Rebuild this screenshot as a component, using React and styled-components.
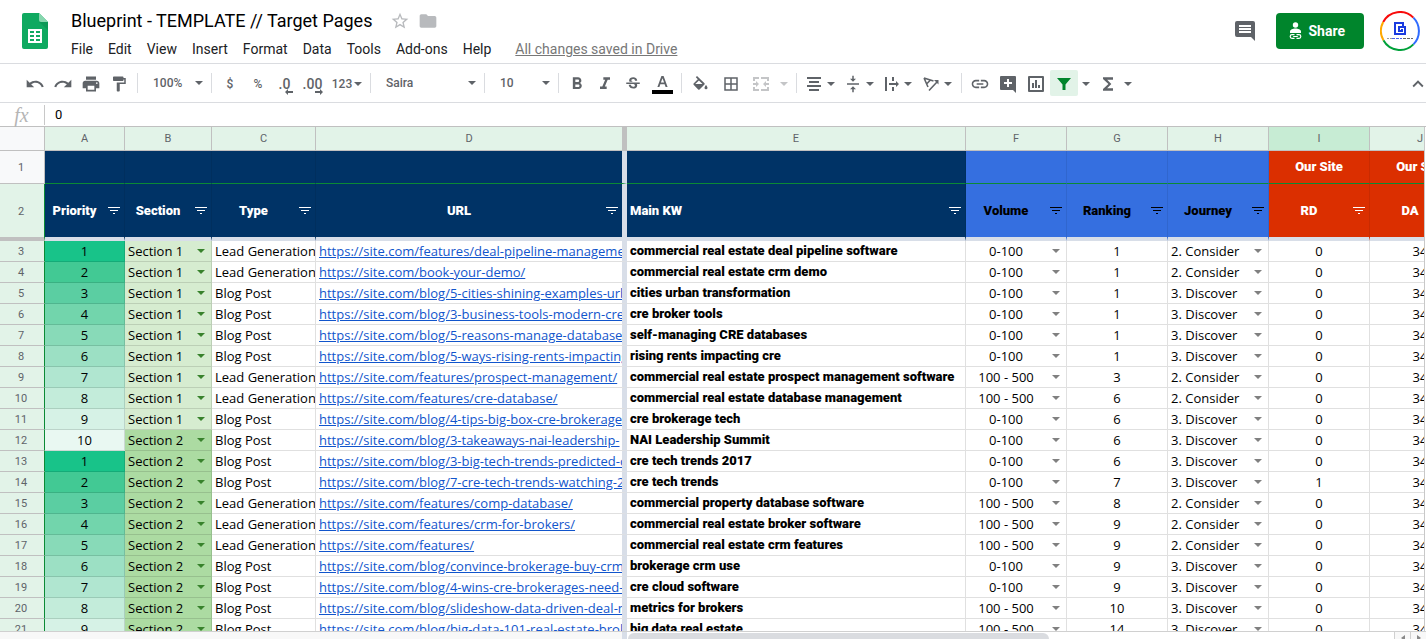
import styled, { createGlobalStyle } from "styled-components"
import {
    MdUndo, MdRedo, MdPrint, MdFormatPaint, MdFormatBold, MdFormatItalic, MdStrikethroughS,
    MdBorderAll, MdVerticalAlignCenter, MdLink,
    MdFunctions, MdExpandLess, MdStarBorder, MdFolder,
} from "react-icons/md"

const GlobalStyle = createGlobalStyle`
    body {
        margin: 0;
        background: #fff;
        color: #000;
        font-family: Roboto, "Liberation Sans", sans-serif;
    }

    button, select, input {
        font: inherit;
        color: inherit;
        margin: 0;
        padding: 0;
        border: 0;
        background: none;
    }

    button {
        cursor: pointer;
    }

    svg {
        display: block;
        flex-shrink: 0;
    }
`

const Page = styled.div`
    display: flex;
    flex-direction: column;
    height: 100vh;
    overflow: hidden;
`

/* ---------- header ---------- */

const Header = styled.header`
    display: flex;
    align-items: center;
    box-sizing: border-box;
    height: 64px;
    flex-shrink: 0;
    padding: 0 6px 1px 22px;
    border-bottom: 1px solid #dadce0;
`

const Titles = styled.div`
    display: flex;
    flex-direction: column;
    flex: 1;
    gap: 6px;
    margin-left: 16px;
    padding-top: 5px;
`

const TitleRow = styled.div`
    display: flex;
    align-items: center;
    padding-left: 7px;
    color: #b8babd;
`

const Title = styled.h1`
    margin: 0 18px 0 0;
    color: #000;
    font-size: 18px;
    font-weight: 400;
    line-height: 24px;
`

const IconButton = styled.button`
    display: flex;
    margin-right: 8px;
`

const MenuBar = styled.nav`
    display: flex;
    align-items: center;
    gap: 1px;
    font-size: 14px;
    line-height: 20px;
    color: #202124;
`

const MenuItem = styled.button`
    padding: 0 7px;
`

const SavedLink = styled.a`
    margin-left: 16px;
    color: #777;
    text-decoration: underline;
`

const ShareButton = styled.button`
    display: flex;
    align-items: center;
    gap: 6px;
    height: 36px;
    margin: 0 16px 0 21px;
    padding: 0 19px 0 13px;
    border-radius: 4px;
    background: #00852c;
    color: #fff;
    font-size: 14px;
    font-weight: 700;
`

/* ---------- toolbar ---------- */

const Toolbar = styled.div`
    display: flex;
    align-items: center;
    height: 38px;
    flex-shrink: 0;
    padding: 0 0 0 21px;
    border-bottom: 1px solid #dadce0;
    color: #5f6368;
    font-size: 12px;
    font-weight: 500;
`

const Tool = styled.button`
    display: flex;
    align-items: center;
    justify-content: center;
    gap: 2px;
    box-sizing: border-box;
    width: ${({ $w }) => $w || 28}px;
    height: 26px;
    padding-top: 2px;
    flex-shrink: 0;
    border-radius: 2px;
    color: ${({ $off, $on }) => ($off ? "#c4c5c7" : $on ? "#00852c" : "inherit")};
    background: ${({ $on }) => ($on ? "#e2f3e8" : "none")};
`

const MenuTool = styled(Tool)`
    width: 39px;
    gap: 4px;
    padding: 2px 5px 0 4px;
`

const Separator = styled.span`
    width: 1px;
    height: 20px;
    margin: 0 4px;
    flex-shrink: 0;
    background: #dadce0;
`

const Picker = styled.label`
    display: grid;
    align-items: center;
    width: ${({ $w }) => $w}px;
    flex-shrink: 0;

    & > * {
        grid-area: 1 / 1;
    }

    & > svg {
        justify-self: end;
        margin-right: 4px;
        pointer-events: none;
    }
`

const PickerSelect = styled.select`
    appearance: none;
    width: 100%;
    height: 26px;
    padding: 0 16px 0 11px;
`

const CollapseButton = styled(Tool)`
    width: 16px;
    margin-left: auto;
`

/* ---------- formula bar ---------- */

const FormulaBar = styled.div`
    display: flex;
    align-items: center;
    height: 23px;
    flex-shrink: 0;
    border-bottom: 1px solid #c0c0c0;
`

const Fx = styled.span`
    width: 45px;
    box-sizing: border-box;
    padding-right: 1px;
    border-right: 1px solid #c8c8c8;
    color: #b5b5b5;
    font-family: "Liberation Serif", serif;
    font-size: 20px;
    font-style: italic;
    line-height: 20px;
    text-align: center;
`

const FormulaInput = styled.input`
    flex: 1;
    padding: 0 10px;
    font-size: 13px;
    outline: none;
`

/* ---------- sheet ---------- */

const SheetArea = styled.div`
    flex: 1;
    min-height: 0;
    margin-right: 1px;
    overflow: hidden;
    border-right: 1px solid #c8c8c8;
`

const Sheet = styled.table`
    width: 1471px;
    table-layout: fixed;
    border-collapse: separate;
    border-spacing: 0;
    font-family: "Open Sans", "Liberation Sans", sans-serif;
    font-size: 13px;
    line-height: 20px;
`

const ColHead = styled.th`
    height: 24px;
    box-sizing: border-box;
    padding: 0;
    border-right: ${({ $frozen }) => ($frozen ? 5 : 1)}px solid #c0c0c0;
    border-bottom: 1px solid #c0c0c0;
    background: ${({ $tone }) => $tone || "#e2f3e8"};
    color: #5f6368;
    font-family: Roboto, sans-serif;
    font-size: 11px;
    font-weight: 400;
`

const RowHead = styled.th`
    box-sizing: border-box;
    height: ${({ $h }) => $h || 21}px;
    padding: 2px 2px 0 0;
    border-right: 1px solid ${({ $plain }) => ($plain ? "#c0c0c0" : "#0b8a35")};
    border-bottom: ${({ $frozen }) => ($frozen ? 4 : 1)}px solid #c0c0c0;
    background: ${({ $plain }) => ($plain ? "#f8f9fa" : "#e2f3e8")};
    color: #5f6368;
    font-family: Roboto, sans-serif;
    font-size: 11px;
    font-weight: 400;
    line-height: 16px;
`

const Cell = styled.td`
    box-sizing: border-box;
    padding: 0 ${({ $pad = 3 }) => $pad}px;
    overflow: hidden;
    border-right: ${({ $frozen }) => ($frozen ? "5px solid #d8dee8" : "1px solid rgba(0, 0, 0, 0.12)")};
    border-bottom: 1px solid rgba(0, 0, 0, 0.12);
    background: ${({ $bg }) => $bg || "#fff"};
    font-family: ${({ $bold }) => ($bold ? "Roboto, sans-serif" : "inherit")};
    font-weight: ${({ $bold }) => ($bold ? 900 : 400)};
    text-align: ${({ $align }) => $align || "left"};
    white-space: nowrap;
`

const TopCell = styled(Cell)`
    border-bottom-color: #0b8a35;
    border-right-color: ${({ $frozen }) => ($frozen ? "#d8dee8" : "rgba(0, 0, 0, 0.08)")};
    color: #fff;
`

const TitleCell = styled(Cell)`
    padding: 0;
    border-bottom: 4px solid #d8dee8;
    border-right-color: ${({ $frozen }) => ($frozen ? "#d8dee8" : "rgba(0, 0, 0, 0.08)")};
    color: ${({ $color }) => $color};
`

const TitleContent = styled.div`
    display: flex;
    align-items: center;

    & > span {
        flex: 1;
        padding-left: ${({ $left }) => ($left ? 3 : 0)}px;
        text-align: ${({ $left }) => ($left ? "left" : "center")};
    }
`

const FilterButton = styled.button`
    display: flex;
    justify-content: center;
    width: 20px;
`

const UrlLink = styled.a`
    color: #1155cc;
    text-decoration: underline;
`

const CellPicker = styled.label`
    display: grid;
    align-items: center;
    height: 20px;
    color: ${({ $caret }) => $caret};

    & > * {
        grid-area: 1 / 1;
    }

    & > svg {
        justify-self: end;
        margin-right: 6px;
        pointer-events: none;
    }
`

const CellSelect = styled.select`
    appearance: none;
    width: 100%;
    height: 20px;
    padding: 0 20px 0 ${({ $center }) => ($center ? 0 : 3)}px;
    color: #000;
    text-align: ${({ $center }) => ($center ? "center" : "left")};
    text-align-last: ${({ $center }) => ($center ? "center" : "left")};
`

/* ---------- bottom scroll bar ---------- */

const ScrollBar = styled.div`
    display: flex;
    height: 7px;
    flex-shrink: 0;
    overflow: hidden;
    border-top: 1px solid #d0d0d0;
`

const FrozenGutter = styled.div`
    width: 622px;
    flex-shrink: 0;
    border-right: 5px solid #d8dee8;
    background: #f8f8f8;
`

const Track = styled.div`
    flex: 1;
    padding: 1px 1px 0;
`

const Thumb = styled.div`
    width: 55%;
    height: 14px;
    border-radius: 6px;
    background: #dadce0;
`

const ScrollStep = styled.button`
    display: flex;
    justify-content: center;
    width: 16px;
    padding-top: 3px;
    box-sizing: border-box;
    border-left: 1px solid #d0d0d0;
    background: #f8f8f8;
`

/* ---------- icons ---------- */

const Caret = ({ color = "currentColor" }) => (
    <svg width="8" height="4" viewBox="0 0 8 4" fill={color}><path d="M0 0h8L4 4z" /></svg>
)

const FilterLines = () => (
    <svg width="12" height="8" viewBox="0 0 12 8" fill="currentColor">
        <path d="M0 0h12v1H0zM2 3h8v1H2zM5 6h2v1H5z" />
    </svg>
)

const SheetsLogo = () => (
    <svg width="26" height="36" viewBox="0 0 26 36">
        <path d="M2 0h15l9 9v25a2 2 0 0 1-2 2H2a2 2 0 0 1-2-2V2a2 2 0 0 1 2-2z" fill="#0fa960" />
        <path d="M17 9h9v8z" fill="#0c9152" opacity=".7" />
        <path d="M17 0l9 9h-7a2 2 0 0 1-2-2z" fill="#87d6ae" />
        <path d="M6 16h14v14H6zM8 18v2h4v-2zM14 18v2h4v-2zM8 22v2h4v-2zM14 22v2h4v-2zM8 26v2h4v-2zM14 26v2h4v-2z" fill="#fff" fillRule="evenodd" />
    </svg>
)

const CommentIcon = () => (
    <svg width="20" height="20" viewBox="0 0 20 20" fill="#5f6368" fillRule="evenodd">
        <path d="M2 0h16a2 2 0 0 1 2 2v18l-4-4H2a2 2 0 0 1-2-2V2a2 2 0 0 1 2-2zM4 4v2h12V4zM4 7v2h12V7zM4 10v2h12v-2z" />
    </svg>
)

const ShareIcon = () => (
    <svg width="13" height="18" viewBox="0 0 13 18" fill="#fff">
        <circle cx="6.5" cy="3" r="2.7" />
        <path d="M1 11V9.500C1 7.500 4 6.500 6.500 6.500s5.500 1 5.500 3V11z" />
        <path d="M5.500 12.700H3a1.800 1.800 0 0 0 0 3.600h2.500M7.500 12.700H10a1.800 1.800 0 0 1 0 3.600H7.500M4.200 14.500h4.600" fill="none" stroke="#fff" strokeWidth="1.200" />
    </svg>
)

const Avatar = () => (
    <svg width="40" height="40" viewBox="0 0 40 40" role="img" aria-label="Account">
        <g fill="none" strokeWidth="2">
            <path d="M3.200 11A19 19 0 0 1 33.400 6.600" stroke="#f80b0b" />
            <path d="M33.400 6.600A19 19 0 0 1 33.400 33.400" stroke="#2f6bff" />
            <path d="M33.400 33.400A19 19 0 0 1 3.400 29.300" stroke="#00a13a" />
            <path d="M3.400 29.300A19 19 0 0 1 3.200 11" stroke="#ffa800" />
        </g>
        <path d="M23 15v-3h-8v11h10v-7h-6v4h3v-2" fill="none" stroke="#1a3be0" strokeWidth="2" />
        <path d="M7 27.500h5" stroke="#999" strokeDasharray="2 1" />
        <path d="M12 27.500h10" stroke="#4a63e8" strokeDasharray="3 1" />
        <path d="M23 27.500h10" stroke="#666" strokeDasharray="3 1" />
    </svg>
)

const DecimalIcon = ({ more }) => (
    <svg width="20" height="22" viewBox="0 0 20 22" fill="currentColor">
        {more
            ? <path d="M11 18h5v-2l3 3-3 3v-2h-5z" />
            : <path d="M17 18h-5v-2l-3 3 3 3v-2h5z" />}
    </svg>
)

const DecimalTool = styled(Tool)`
    display: grid;
    justify-items: center;

    & > * {
        grid-area: 1 / 1;
    }

    & > span {
        padding-right: 3px;
        font-size: 14px;
        line-height: 16px;
    }
`

const TextColorIcon = () => (
    <svg width="21" height="22" viewBox="0 0 21 22">
        <path d="M9.400 3h2.200l4 11h-2l-1-2.800H8.300L7.400 14h-2zM10.500 5.200L8.900 9.600h3.200z" fill="#5f6368" fillRule="evenodd" />
        <path d="M0 17h21v4H0z" fill="#000" />
    </svg>
)

const FillIcon = () => (
    <svg width="16" height="16" viewBox="0 0 16 16" fill="currentColor" fillRule="evenodd">
        <path d="M4 0l-1.200 1.200 2 2L.6 7.600a1 1 0 0 0 0 1.200l4.600 4.600a1 1 0 0 0 1.300 0l5-5a1 1 0 0 0 0-1.200zM5.900 4.400L9.500 8H2.300z" />
        <path d="M13 9s-1.500 1.700-1.500 2.800a1.500 1.500 0 0 0 3 0C14.500 10.700 13 9 13 9z" />
    </svg>
)

const MergeIcon = () => (
    <svg width="18" height="16" viewBox="0 0 18 16" fill="currentColor">
        <path d="M1 1h6v2H3v2H1zM9 1h8v4h-2V3H9zM1 11h2v2h4v2H1zM15 11h2v4H9v-2h6zM1 7h3V5l3 3-3 3V9H1zM17 7h-3V5l-3 3 3 3V9h3z" />
    </svg>
)

const AlignIcon = () => (
    <svg width="18" height="14" viewBox="0 0 18 14" fill="currentColor">
        <path d="M2 0h14v2H2zM4 4h10v2H4zM2 8h14v2H2zM4 12h10v2H4z" />
    </svg>
)

const WrapIcon = () => (
    <svg width="16" height="14" viewBox="0 0 16 14" fill="currentColor">
        <path d="M1 0h2v14H1zM8 0h2v4H8zM8 10h2v4H8zM5 6h7V4l3 3-3 3V8H5z" />
    </svg>
)

const RotateIcon = () => (
    <svg width="18" height="16" viewBox="0 0 18 16" fill="none" stroke="currentColor" strokeWidth="1.600">
        <path d="M2 2l9.500 3M2 2l4 9M8.500 4L4.500 8M7 14.500L15 6" />
        <path d="M12 4h4.500v4.500z" fill="currentColor" stroke="none" />
    </svg>
)

const AddCommentIcon = () => (
    <svg width="16" height="17" viewBox="0 0 16 17" fill="currentColor" fillRule="evenodd">
        <path d="M1 0h14a1 1 0 0 1 1 1v16l-3-3H1a1 1 0 0 1-1-1V1a1 1 0 0 1 1-1zM7 3v3H4v2h3v3h2V8h3V6H9V3z" />
    </svg>
)

const ChartIcon = () => (
    <svg width="16" height="16" viewBox="0 0 16 16" fill="currentColor" fillRule="evenodd">
        <path d="M1 0h14a1 1 0 0 1 1 1v14a1 1 0 0 1-1 1H1a1 1 0 0 1-1-1V1a1 1 0 0 1 1-1zM2 2v12h12V2zM4 7h2v5H4zM7 4h2v8H7zM10 9h2v3h-2z" />
    </svg>
)

const FunnelIcon = () => (
    <svg width="14" height="12" viewBox="0 0 14 12" fill="currentColor"><path d="M0 0h14L8.500 6.500V12h-3V6.500z" /></svg>
)

/* ---------- data ---------- */

const NAVY = "#003366"
const BLUE = "#356fe0"
const RED = "#db2f00"

const columns = [
    { id: "A", width: 80, title: "Priority", bg: NAVY, color: "#fff" },
    { id: "B", width: 87, title: "Section", bg: NAVY, color: "#fff" },
    { id: "C", width: 104, title: "Type", bg: NAVY, color: "#fff" },
    { id: "D", width: 311, title: "URL", bg: NAVY, color: "#fff", frozen: true },
    { id: "E", width: 339, title: "Main KW", bg: NAVY, color: "#fff", left: true },
    { id: "F", width: 101, title: "Volume", bg: BLUE, color: "#000" },
    { id: "G", width: 101, title: "Ranking", bg: BLUE, color: "#000" },
    { id: "H", width: 101, title: "Journey", bg: BLUE, color: "#000" },
    { id: "I", width: 101, title: "RD", bg: RED, color: "#fff", top: "Our Site", active: true },
    { id: "J", width: 101, title: "DA", bg: RED, color: "#fff", top: "Our Site" },
]

const priorityColors = [
    "#18c389", "#42c994", "#5bcea2", "#72d5ac", "#88dab8",
    "#9ce0c4", "#b0e6d0", "#c3ecda", "#d6f2e6", "#e9f8f2",
]

const LEAD = "Lead Generation"
const BLOG = "Blog Post"
const LOW = "0-100"
const HIGH = "100 - 500"
const CONSIDER = "2. Consider"
const DISCOVER = "3. Discover"

// priority, section, type, path, keyword, volume, ranking, journey, rd
const rows = [
    [1, 1, LEAD, "features/deal-pipeline-management/", "commercial real estate deal pipeline software", LOW, 1, CONSIDER, 0],
    [2, 1, LEAD, "book-your-demo/", "commercial real estate crm demo", LOW, 1, CONSIDER, 0],
    [3, 1, BLOG, "blog/5-cities-shining-examples-urban", "cities urban transformation", LOW, 1, DISCOVER, 0],
    [4, 1, BLOG, "blog/3-business-tools-modern-cre-", "cre broker tools", LOW, 1, DISCOVER, 0],
    [5, 1, BLOG, "blog/5-reasons-manage-databases", "self-managing CRE databases", LOW, 1, DISCOVER, 0],
    [6, 1, BLOG, "blog/5-ways-rising-rents-impacting", "rising rents impacting cre", LOW, 1, DISCOVER, 0],
    [7, 1, LEAD, "features/prospect-management/", "commercial real estate prospect management software", HIGH, 3, CONSIDER, 0],
    [8, 1, LEAD, "features/cre-database/", "commercial real estate database management", HIGH, 6, CONSIDER, 0],
    [9, 1, BLOG, "blog/4-tips-big-box-cre-brokerage", "cre brokerage tech", LOW, 6, DISCOVER, 0],
    [10, 2, BLOG, "blog/3-takeaways-nai-leadership-", "NAI Leadership Summit", LOW, 6, DISCOVER, 0],
    [1, 2, BLOG, "blog/3-big-tech-trends-predicted-c", "cre tech trends 2017", LOW, 6, DISCOVER, 0],
    [2, 2, BLOG, "blog/7-cre-tech-trends-watching-2", "cre tech trends", LOW, 7, DISCOVER, 1],
    [3, 2, LEAD, "features/comp-database/", "commercial property database software", HIGH, 8, CONSIDER, 0],
    [4, 2, LEAD, "features/crm-for-brokers/", "commercial real estate broker software", HIGH, 9, CONSIDER, 0],
    [5, 2, LEAD, "features/", "commercial real estate crm features", HIGH, 9, CONSIDER, 0],
    [6, 2, BLOG, "blog/convince-brokerage-buy-crm/", "brokerage crm use", LOW, 9, DISCOVER, 0],
    [7, 2, BLOG, "blog/4-wins-cre-brokerages-need-", "cre cloud software", LOW, 9, DISCOVER, 0],
    [8, 2, BLOG, "blog/slideshow-data-driven-deal-m", "metrics for brokers", HIGH, 10, DISCOVER, 0],
    [9, 2, BLOG, "blog/big-data-101-real-estate-brok", "big data real estate", HIGH, 14, DISCOVER, 0],
]

const menus = ["File", "Edit", "View", "Insert", "Format", "Data", "Tools", "Add-ons", "Help"]

function DropCell({ label, value, options, center, bg, caret = "#808080" }) {
    return (
        <Cell $bg={bg} $pad={0}>
            <CellPicker $caret={caret}>
                <CellSelect aria-label={label} defaultValue={value} $center={center}>
                    {options.map((o) => <option key={o}>{o}</option>)}
                </CellSelect>
                <Caret />
            </CellPicker>
        </Cell>
    )
}

function SheetRow({ number, row }) {
    const [priority, section, type, path, keyword, volume, ranking, journey, rd] = row
    const url = `https://site.com/${path}`
    return (
        <tr>
            <RowHead scope="row">{number}</RowHead>
            <Cell $bg={priorityColors[priority - 1]} $align="center">{priority}</Cell>
            <DropCell
                label={`Section, row ${number}`}
                value={`Section ${section}`}
                options={["Section 1", "Section 2"]}
                bg={section === 1 ? "#d6ecd0" : "#acdba2"}
                caret="#38822c"
            />
            <Cell>{type}</Cell>
            <Cell $frozen><UrlLink href={url}>{url}</UrlLink></Cell>
            <Cell $bold>{keyword}</Cell>
            <DropCell label={`Volume, row ${number}`} value={volume} options={[LOW, HIGH]} center />
            <Cell $align="center">{ranking}</Cell>
            <DropCell label={`Journey, row ${number}`} value={journey} options={[CONSIDER, DISCOVER]} />
            <Cell $align="center">{rd}</Cell>
            <Cell $align="center">34</Cell>
        </tr>
    )
}

function TopBar() {
    return (
        <Header>
            <SheetsLogo />
            <Titles>
                <TitleRow>
                    <Title>Blueprint - TEMPLATE // Target Pages</Title>
                    <IconButton aria-label="Star"><MdStarBorder size={20} /></IconButton>
                    <IconButton aria-label="Move"><MdFolder size={20} /></IconButton>
                </TitleRow>
                <MenuBar>
                    {menus.map((m) => <MenuItem key={m}>{m}</MenuItem>)}
                    <SavedLink href="#history">All changes saved in Drive</SavedLink>
                </MenuBar>
            </Titles>
            <button aria-label="Comments"><CommentIcon /></button>
            <ShareButton><ShareIcon />Share</ShareButton>
            <Avatar />
        </Header>
    )
}

function ToolRow() {
    return (
        <Toolbar role="toolbar">
            <Tool aria-label="Undo"><MdUndo size={20} /></Tool>
            <Tool aria-label="Redo"><MdRedo size={20} /></Tool>
            <Tool aria-label="Print"><MdPrint size={20} /></Tool>
            <Tool aria-label="Paint format"><MdFormatPaint size={18} /></Tool>
            <Separator />
            <Picker $w={65}>
                <PickerSelect aria-label="Zoom"><option>100%</option></PickerSelect>
                <Caret />
            </Picker>
            <Separator />
            <Tool aria-label="Currency">$</Tool>
            <Tool aria-label="Percent">%</Tool>
            <DecimalTool aria-label="Fewer decimals"><span>.0</span><DecimalIcon /></DecimalTool>
            <DecimalTool aria-label="More decimals"><span>.00</span><DecimalIcon more /></DecimalTool>
            <Tool $w={38} aria-label="Number format">123<Caret /></Tool>
            <Separator />
            <Picker $w={105}>
                <PickerSelect aria-label="Font"><option>Saira</option></PickerSelect>
                <Caret />
            </Picker>
            <Separator />
            <Picker $w={65}>
                <PickerSelect aria-label="Font size"><option>10</option></PickerSelect>
                <Caret />
            </Picker>
            <Separator />
            <Tool aria-label="Bold"><MdFormatBold size={20} /></Tool>
            <Tool aria-label="Italic"><MdFormatItalic size={20} /></Tool>
            <Tool aria-label="Strikethrough"><MdStrikethroughS size={18} /></Tool>
            <Tool $w={30} aria-label="Text color"><TextColorIcon /></Tool>
            <Separator />
            <Tool $w={30} aria-label="Fill color"><FillIcon /></Tool>
            <Tool $w={30} aria-label="Borders"><MdBorderAll size={18} /></Tool>
            <Tool $w={30} $off aria-label="Merge cells"><MergeIcon /></Tool>
            <Tool $w={16} $off aria-label="Merge options"><Caret /></Tool>
            <Separator />
            <MenuTool aria-label="Horizontal align"><AlignIcon /><Caret /></MenuTool>
            <MenuTool aria-label="Vertical align"><MdVerticalAlignCenter size={18} /><Caret /></MenuTool>
            <MenuTool aria-label="Text wrapping"><WrapIcon /><Caret /></MenuTool>
            <MenuTool aria-label="Text rotation"><RotateIcon /><Caret /></MenuTool>
            <Separator />
            <Tool aria-label="Insert link"><MdLink size={20} /></Tool>
            <Tool aria-label="Insert comment"><AddCommentIcon /></Tool>
            <Tool aria-label="Insert chart"><ChartIcon /></Tool>
            <Tool $on aria-label="Filter"><FunnelIcon /></Tool>
            <Tool $w={16} aria-label="Filter views"><Caret /></Tool>
            <Tool aria-label="Functions"><MdFunctions size={20} /></Tool>
            <Tool $w={12} aria-label="More functions"><Caret /></Tool>
            <CollapseButton aria-label="Hide menus"><MdExpandLess size={22} /></CollapseButton>
        </Toolbar>
    )
}

export default function App() {
    return (
        <Page>
            <GlobalStyle />
            <TopBar />
            <ToolRow />
            <FormulaBar>
                <Fx>fx</Fx>
                <FormulaInput aria-label="Formula" defaultValue="0" />
            </FormulaBar>
            <SheetArea>
                <Sheet>
                    <colgroup>
                        <col width="45" />
                        {columns.map((c) => <col key={c.id} width={c.width} />)}
                    </colgroup>
                    <thead>
                        <tr>
                            <ColHead $tone="#f8f9fa" />
                            {columns.map((c) => (
                                <ColHead key={c.id} scope="col" $frozen={c.frozen} $tone={c.active && "#c7ecd4"}>{c.id}</ColHead>
                            ))}
                        </tr>
                    </thead>
                    <tbody>
                        <tr>
                            <RowHead scope="row" $h={33} $plain>1</RowHead>
                            {columns.map((c) => (
                                <TopCell key={c.id} $bg={c.bg} $frozen={c.frozen} $bold $align="center">{c.top}</TopCell>
                            ))}
                        </tr>
                        <tr>
                            <RowHead scope="row" $h={57} $frozen>2</RowHead>
                            {columns.map((c) => (
                                <TitleCell key={c.id} $bg={c.bg} $color={c.color} $frozen={c.frozen} $bold>
                                    <TitleContent $left={c.left}>
                                        <span>{c.title}</span>
                                        <FilterButton aria-label={`Filter ${c.title}`}><FilterLines /></FilterButton>
                                    </TitleContent>
                                </TitleCell>
                            ))}
                        </tr>
                        {rows.map((row, i) => <SheetRow key={i} number={i + 3} row={row} />)}
                    </tbody>
                </Sheet>
            </SheetArea>
            <ScrollBar>
                <FrozenGutter />
                <Track><Thumb /></Track>
                <ScrollStep aria-label="Scroll left">
                    <svg width="4" height="6" viewBox="0 0 4 6" fill="#888"><path d="M4 0v6L0 3z" /></svg>
                </ScrollStep>
                <ScrollStep aria-label="Scroll right">
                    <svg width="4" height="6" viewBox="0 0 4 6" fill="#888"><path d="M0 0v6l4-3z" /></svg>
                </ScrollStep>
            </ScrollBar>
        </Page>
    )
}
